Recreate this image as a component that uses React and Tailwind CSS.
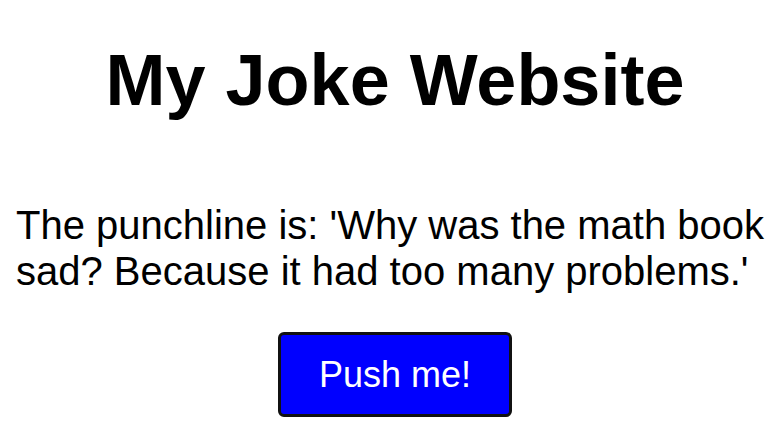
export default function App() {
  return (
    <div className="min-h-screen bg-white pl-4 pr-2 text-black font-['Liberation_Sans',Arial,sans-serif]">
      <h1 className="pt-[39px] text-center text-[72px] font-bold leading-[1.15]">My Joke Website</h1>

      <p className="mt-[80px] text-[40px] leading-[1.15]">
        The punchline is: 'Why was the math book sad? Because it had too many problems.'
      </p>

      <div className="mt-[38px] flex justify-center">
        <button
          type="button"
          className="rounded-md border-[3px] border-[#111] bg-[#0000ff] px-[38px] py-[19px] text-[36px] leading-[1.15] text-white"
        >
          Push me!
        </button>
      </div>
    </div>
  )
}
